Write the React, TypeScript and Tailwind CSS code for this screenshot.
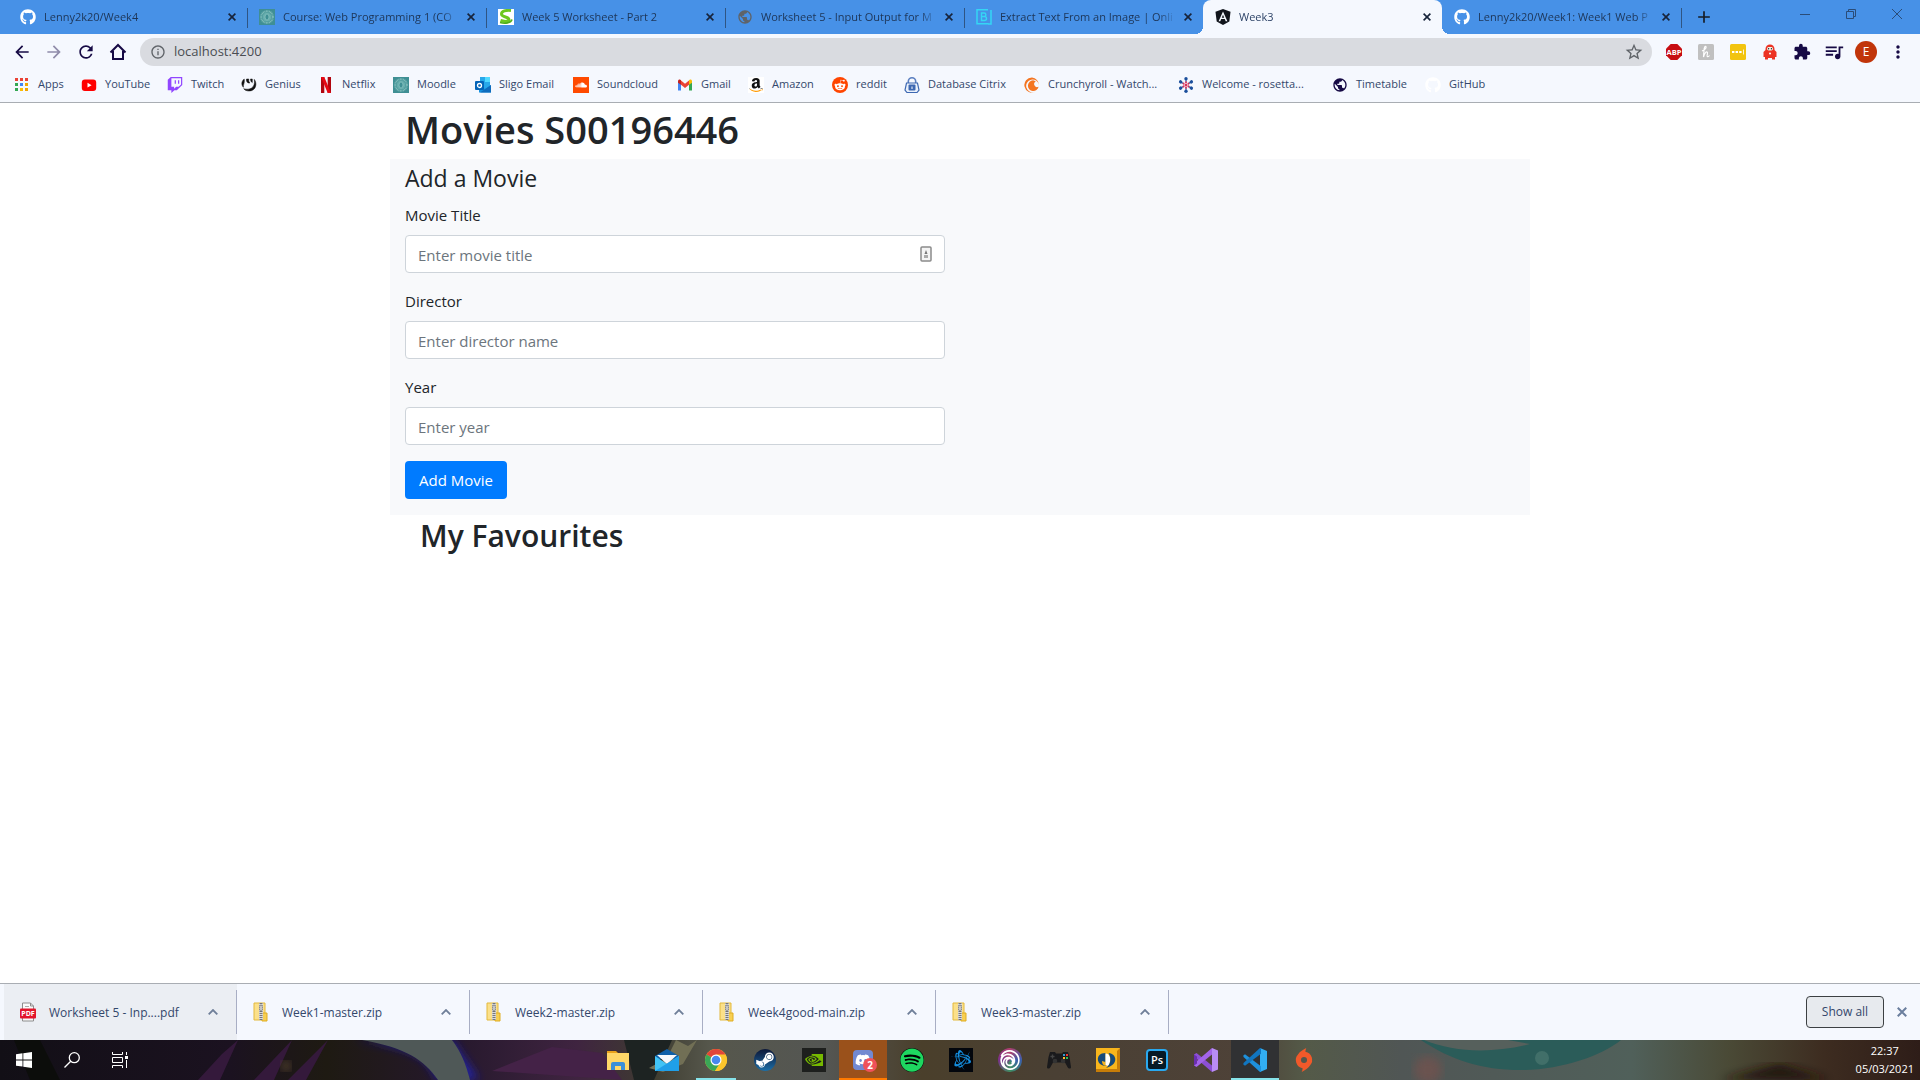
import type { ReactNode } from "react";
import { FaAmazon, FaBattleNet, FaDiscord, FaGithub, FaRedditAlien, FaSoundcloud, FaSpotify, FaSteamSymbol, FaTwitch } from "react-icons/fa";
import {
  MdAdd, MdArrowBack, MdArrowForward, MdExtension, MdInfoOutline, MdMoreVert,
  MdPublic, MdQueueMusic, MdRefresh, MdStarBorder,
} from "react-icons/md";
import { SiNvidia, SiUbisoft } from "react-icons/si";

/* ---------- small drawings ---------- */

const Cross = ({ className }: { className: string }) => (
  <svg viewBox="0 0 8 8" className={className} stroke="currentColor" strokeWidth="1.600"><path d="M.6.6l6.800 6.800M7.400.6L.6 7.400" /></svg>
);

const Moodle = () => (
  <svg viewBox="0 0 16 16" className="size-4">
    <rect width="16" height="16" fill="#3f8f94" />
    <circle cx="8" cy="8" r="5.800" fill="none" stroke="#7fbcb9" strokeWidth="2" strokeDasharray="1 .5" />
    <circle cx="8" cy="8" r="4.500" fill="#66adad" />
    <ellipse cx="8" cy="8" rx="2" ry="3" fill="#3f8f94" stroke="#9bd0cc" strokeWidth=".6" />
  </svg>
);

const Sharp = () => (
  <svg viewBox="0 0 16 16" className="size-4">
    <rect width="16" height="16" fill="#fff" />
    <path d="M13 1.500C8 1 3.500 2 3.500 5c0 3.500 7.500 2.500 7.500 5.500 0 2-4 2.500-8.500 1" fill="none" stroke="#6cc820" strokeWidth="3" />
    <path d="M2 13.500c5 1.500 11 .5 12-3" fill="none" stroke="#4fae17" strokeWidth="1.600" />
  </svg>
);

const Brandfolder = () => (
  <svg viewBox="0 0 16 16" className="size-4" fill="none" stroke="#35d6f5">
    <path d="M12 .8H1v14h11.500M15 1v14h-3" strokeWidth="1.500" />
    <path d="M5.500 4v7.500h3a2 2 0 0 0 0-4h-3 2.600a1.700 1.700 0 0 0 0-3.500z" strokeWidth="1.400" />
  </svg>
);

const Angular = () => (
  <svg viewBox="0 0 16 16" className="size-4">
    <path d="M8 0l7.500 2.700-1.200 9.700L8 16l-6.300-3.600L.5 2.700z" fill="#11141b" />
    <path d="M8 2.500L3.600 12.300h1.700l.9-2.200h3.600l.9 2.200h1.700zM8 5.700l1.200 3H6.800z" fill="#f5f8fe" />
  </svg>
);

const Apps = () => (
  <svg viewBox="0 0 16 16" className="size-4">
    {["#ea4335", "#ea4335", "#ea4335", "#34a853", "#4285f4", "#f2a600", "#34a853", "#fbbc04", "#f2a600"].map((c, i) => (
      <rect key={i} x={1 + (i % 3) * 5} y={1 + Math.floor(i / 3) * 5} width="3" height="3" fill={c} />
    ))}
  </svg>
);

const YouTube = () => (
  <svg viewBox="0 0 16 16" className="size-4">
    <rect x=".8" y="2.500" width="14.400" height="11.500" rx="3" fill="#f00" />
    <path d="M6.500 5.800v4.800L10.600 8.200z" fill="#fff" />
  </svg>
);

const Genius = () => (
  <svg viewBox="0 0 16 16" className="size-4">
    <path d="M3.200 2c-3 2.400-3 6-.8 8.300C2 7.500 4 6 3.200 2zM5.500 2h2.300c-.3 2 .2 3.200 1.200 4-2.300.4-4-1.200-3.500-4zM9.500 2h1.800v3.600c-1.200-.6-1.800-2-1.800-3.600zM13.300 2.400c3.200 4 1.700 11.600-5.300 11.600-2.500 0-4.200-1-5.300-2.300 5.800 1.800 12-.7 10.600-9.300z" fill="#111" stroke="#111" strokeWidth=".5" />
  </svg>
);

const Netflix = () => (
  <svg viewBox="0 0 16 16" className="size-4">
    <path d="M3 0h3.300v16L3 16zM9.700 0H13v16H9.700z" fill="#b1060f" />
    <path d="M3 0h3.300L13 16H9.700z" fill="#e50914" />
  </svg>
);

const Outlook = () => (
  <svg viewBox="0 0 16 16" className="size-4">
    <rect x="5" y="0" width="10" height="12" fill="#28a8ea" />
    <rect x="10" y="0" width="5" height="5" fill="#50d9ff" />
    <path d="M4 8l6 4 6-4v7.500H4z" fill="#1490df" />
    <path d="M16 8v7.500H5z" fill="#0f6cbd" />
    <rect x="0" y="4" width="9" height="9" rx="1" fill="#0364b8" />
    <circle cx="4.500" cy="8.500" r="2" fill="none" stroke="#fff" strokeWidth="1.300" />
  </svg>
);

const Gmail = () => (
  <svg viewBox="0 0 16 16" className="size-4">
    <path d="M1 4v9.500h3V6z" fill="#4285f4" />
    <path d="M15 4v9.500h-3V6z" fill="#34a853" />
    <path d="M4 3.500l4 3.300 4-3.300v4.200l-4 3.200-4-3.200z" fill="#ea4335" />
    <path d="M1 4.500C1 2.500 3 2 4 3.300v4.400l-3-2z" fill="#c5221f" />
    <path d="M15 4.500c0-2-2-2.500-3-1.200v4.400l3-2z" fill="#fbbc04" />
  </svg>
);

const Lock = () => (
  <svg viewBox="0 0 16 16" className="size-4">
    <path d="M4.300 7V4.500a3.700 3.700 0 0 1 7.400 0V7" fill="none" stroke="#5a7fc0" strokeWidth="1.600" />
    <path d="M2.500 6h11l1.500 7-2 2.500H3L1 13z" fill="#eaf1fb" stroke="#3d68b2" strokeWidth="1.200" />
    <rect x="4.500" y="7.500" width="7" height="6" rx="1" fill="#3d68b2" />
    <path d="M8 9.500v2.500" stroke="#fff" />
  </svg>
);

const Crunchyroll = () => (
  <svg viewBox="0 0 16 16" className="size-4">
    <path d="M8 .5a7.500 7.500 0 1 0 3 14.300A6.400 6.400 0 1 1 14.900 8 7.500 7.500 0 0 0 8 .5z" fill="#f47521" />
    <path d="M9 3.300a5.400 5.400 0 1 0 5.600 6.500A2.600 2.600 0 1 1 11.800 4.500 5.400 5.400 0 0 0 9 3.300z" fill="#f47521" />
  </svg>
);

const Rosetta = () => (
  <svg viewBox="0 0 16 16" className="size-4">
    {[0, 60, 120, 180, 240, 300].map((a) => (
      <g key={a} transform={`rotate(${a} 8 8)`}>
        <path d="M8 5V2" stroke="#1b4f9c" strokeWidth="1" />
        <circle cx="8" cy="1.800" r="1.700" fill="#1b4f9c" />
        <circle cx="8" cy="5.200" r="1" fill="#d8335a" />
      </g>
    ))}
    <circle cx="8" cy="8" r="1.500" fill="#d8335a" />
  </svg>
);

const Amazon = () => (
  <span className="flex size-4 items-center justify-center bg-white">
    <svg viewBox="0 0 448 512" className="size-4">
      <defs>
        <linearGradient id="amz" gradientUnits="userSpaceOnUse" x1="0" x2="0" y1="0" y2="512">
          <stop offset=".72" stopColor="#111" />
          <stop offset=".73" stopColor="#f90" />
        </linearGradient>
      </defs>
      <FaAmazon size={512} x={-32} style={{ fill: "url(#amz)" }} />
    </svg>
  </span>
);

const Zip = () => (
  <svg viewBox="0 0 16 20" className="h-5 w-4">
    <path d="M1 1h11v17H1z" fill="#fbe08a" stroke="#e3b93c" />
    <path d="M9 11h5v8H9z" fill="#f7cf52" stroke="#e0ad22" />
    <path d="M6 1h4v17H6z" fill="#d9d9d9" />
    <path d="M8 1v17" stroke="#777" strokeWidth="3" strokeDasharray="1 1" />
    <rect x="7" y="3" width="2" height="6" rx="1" fill="#f4f4f4" stroke="#555" strokeWidth=".6" />
  </svg>
);

const Pdf = () => (
  <svg viewBox="0 0 16 20" className="h-5 w-4">
    <path d="M2.500 1h8l3 3v15h-11z" fill="#fafafa" stroke="#8d8d8d" />
    <path d="M10.500 1v3h3" fill="none" stroke="#8d8d8d" />
    <path d="M5 4.500h4" stroke="#aaa" />
    <rect x="0" y="6.500" width="16" height="10" rx="1" fill="#e2162c" />
    <text x="8" y="14" textAnchor="middle" fontSize="7" fontWeight="700" fill="#fff" fontFamily="Open Sans, sans-serif">PDF</text>
  </svg>
);

/* ---------- browser chrome ---------- */

const Octocat = ({ className = "text-white" }: { className?: string }) => <FaGithub className={`size-4 ${className}`} />;

type Tab = { title: string; icon: ReactNode; active?: boolean; next?: boolean };

const tabs: Tab[] = [
  { title: "Lenny2k20/Week4", icon: <Octocat /> },
  { title: "Course: Web Programming 1 (CO", icon: <Moodle /> },
  { title: "Week 5 Worksheet - Part 2", icon: <Sharp /> },
  { title: "Worksheet 5 - Input Output for M", icon: <MdPublic className="size-4 text-[#5f6368]" /> },
  { title: "Extract Text From an Image | Onli", icon: <Brandfolder />, next: true },
  { title: "Week3", icon: <Angular />, active: true },
  { title: "Lenny2k20/Week1: Week1 Web P", icon: <Octocat /> },
];

function TabStrip() {
  return (
    <header className="flex h-[34px] bg-[#4791e7] pl-2 text-[#1d3557]">
      <div role="tablist" className="flex min-w-0">
        {tabs.map((t) => (
          <div
            key={t.title}
            role="tab"
            aria-selected={!!t.active}
            className={`relative flex w-[239px] min-w-0 items-center pr-[7px] pl-3 ${t.active ? "rounded-t-lg bg-[#f5f8fe] text-[#2e4468]" : ""}`}
          >
            {t.icon}
            <span className="mr-1 ml-2 flex-1 overflow-hidden whitespace-nowrap [mask-image:linear-gradient(to_right,#000_90%,transparent)]">{t.title}</span>
            <button aria-label="Close tab" className="flex size-4 items-center justify-center text-[#17233a]">
              <Cross className="size-2" />
            </button>
            {!t.active && !t.next && <i className="absolute top-2 -right-px h-5 w-px bg-[#2f5583]" />}
            {t.active && (
              <>
                <i className="absolute bottom-0 -left-2 size-2 bg-[radial-gradient(circle_at_0_0,#4791e7_8px,#f5f8fe_8px)]" />
                <i className="absolute -right-2 bottom-0 size-2 bg-[radial-gradient(circle_at_100%_0,#4791e7_8px,#f5f8fe_8px)]" />
              </>
            )}
          </div>
        ))}
      </div>
      <button aria-label="New tab" className="ml-[11px] flex w-6 items-center justify-center text-[#161c26]">
        <MdAdd className="size-5" />
      </button>
      <div className="ml-auto flex h-7 text-[#2a4c78]">
        <button aria-label="Minimise" className="flex w-[46px] items-center justify-center">
          <svg viewBox="0 0 10 10" className="size-2.5" stroke="currentColor"><path d="M0 5.500h10" /></svg>
        </button>
        <button aria-label="Restore" className="flex w-[46px] items-center justify-center">
          <svg viewBox="0 0 10 10" className="size-2.5" fill="none" stroke="currentColor"><path d="M.5 2.500h7v7h-7zM2.500 2V.5h7v7H8" /></svg>
        </button>
        <button aria-label="Close" className="flex w-[46px] items-center justify-center">
          <svg viewBox="0 0 10 10" className="size-2.5" stroke="currentColor"><path d="M0 0l10 10M10 0L0 10" /></svg>
        </button>
      </div>
    </header>
  );
}

function ToolButton({ label, children }: { label: string; children: ReactNode }) {
  return (
    <button aria-label={label} className="flex size-8 items-center justify-center text-[#160a45]">
      {children}
    </button>
  );
}

function Toolbar() {
  return (
    <div className="flex h-[35px] items-center bg-[#f5f8fe] pr-1.5 pl-1.5">
      <ToolButton label="Back"><MdArrowBack className="size-5" /></ToolButton>
      <ToolButton label="Forward"><MdArrowForward className="size-5 opacity-45" /></ToolButton>
      <ToolButton label="Reload"><MdRefresh className="size-5" /></ToolButton>
      <ToolButton label="Home">
        <svg viewBox="0 0 18 18" className="size-[18px]" fill="none" stroke="currentColor" strokeWidth="2"><path d="M1.500 9.500L9 2l7.500 7.500M4 8v8h10V8" /></svg>
      </ToolButton>
      <label className="ml-1.5 flex h-7 flex-1 items-center rounded-full bg-[#d9dbe0] pr-2 pl-2.5 text-[#5f6368]">
        <MdInfoOutline className="size-4" />
        <input aria-label="Address" defaultValue="localhost:4200" className="ml-2 flex-1 bg-transparent text-[13px] text-[#4a4d52] outline-none" />
        <MdStarBorder className="size-5" />
      </label>
      <div className="ml-1.5 flex items-center">
        <ToolButton label="Adblock Plus">
          <svg viewBox="0 0 16 16" className="size-4">
            <path d="M4.700 0h6.600L16 4.700v6.600L11.300 16H4.700L0 11.300V4.700z" fill="#c70d12" />
            <text x="8" y="10.800" textAnchor="middle" fontSize="7.500" fontWeight="700" fill="#fff" fontFamily="Open Sans, sans-serif">ABP</text>
          </svg>
        </ToolButton>
        <ToolButton label="Honey">
          <svg viewBox="0 0 16 16" className="size-4">
            <rect width="16" height="16" rx="1.500" fill="#c0c0c0" />
            <path d="M4 7c3-1 4.500-3 4-4.300S6 3 6 6.500L5.500 13C6.500 9.500 8 7.500 9.200 8s-.9 4 .1 4.500 1.700-.3 2.200-1" fill="none" stroke="#fff" strokeWidth="1.200" />
          </svg>
        </ToolButton>
        <ToolButton label="Password manager">
          <svg viewBox="0 0 16 16" className="size-4">
            <rect width="16" height="16" rx="1.500" fill="#f2c40f" />
            <path d="M2 8h9.600" stroke="#fff" strokeWidth="2.200" strokeDasharray="2.400 1.200" />
            <path d="M13.500 5.500v5" stroke="#fff" strokeWidth=".8" />
          </svg>
        </ToolButton>
        <ToolButton label="VPN">
          <svg viewBox="0 0 16 16" className="size-4">
            <path d="M3.500 6V5a4.500 4.500 0 0 1 9 0v1l2 2v5h-1.500v2.500h-3V14H6v1.500H3V13H1.500V8z" fill="#ec3324" />
            <rect x="5" y="3" width="6" height="3.500" rx="1.700" fill="#f2f6ea" />
            <circle cx="6.600" cy="4.700" r=".7" fill="#222" /><circle cx="9.400" cy="4.700" r=".7" fill="#222" />
            <circle cx="8" cy="9.500" r="1" fill="#fff" />
          </svg>
        </ToolButton>
        <ToolButton label="Extensions"><MdExtension className="size-[18px]" /></ToolButton>
        <ToolButton label="Media"><MdQueueMusic className="size-[22px]" /></ToolButton>
        <ToolButton label="Profile">
          <span className="flex size-[22px] items-center justify-center rounded-full bg-[#c1350a] text-xs text-white">E</span>
        </ToolButton>
        <ToolButton label="Menu"><MdMoreVert className="size-5" /></ToolButton>
      </div>
    </div>
  );
}

const bookmarks: { label: string; icon: ReactNode; width: string }[] = [
  { label: "Apps", icon: <Apps />, width: "w-[67px]" },
  { label: "YouTube", icon: <YouTube />, width: "w-[86px]" },
  { label: "Twitch", icon: <FaTwitch className="size-4 text-[#9146ff]" />, width: "w-[74px]" },
  { label: "Genius", icon: <Genius />, width: "w-[77px]" },
  { label: "Netflix", icon: <Netflix />, width: "w-[75px]" },
  { label: "Moodle", icon: <Moodle />, width: "w-[82px]" },
  { label: "Sligo Email", icon: <Outlook />, width: "w-[98px]" },
  {
    label: "Soundcloud",
    icon: <span className="flex size-4 items-center justify-center bg-[#ff4a00]"><FaSoundcloud className="size-3 text-white" /></span>,
    width: "w-[104px]",
  },
  { label: "Gmail", icon: <Gmail />, width: "w-[71px]" },
  { label: "Amazon", icon: <Amazon />, width: "w-[84px]" },
  {
    label: "reddit",
    icon: <span className="flex size-4 items-center justify-center rounded-full bg-[#ff4500]"><FaRedditAlien className="size-3 text-white" /></span>,
    width: "w-[72px]",
  },
  { label: "Database Citrix", icon: <Lock />, width: "w-[120px]" },
  { label: "Crunchyroll - Watch...", icon: <Crunchyroll />, width: "w-[154px]" },
  { label: "Welcome - rosetta...", icon: <Rosetta />, width: "w-[154px]" },
  { label: "Timetable", icon: <MdPublic className="size-[18px] text-[#160a45]" />, width: "w-[93px]" },
  { label: "GitHub", icon: <Octocat />, width: "w-[77px]" },
];

function BookmarksBar() {
  return (
    <nav className="flex h-[34px] items-center border-b border-[#a9adb3] bg-[#f5f8fe] pb-0.5 pl-3.5 text-[#33476b]">
      {bookmarks.map((b) => (
        <a key={b.label} href="#" className={`flex shrink-0 items-center gap-2 whitespace-nowrap ${b.width}`}>
          <span className="flex size-4 shrink-0 items-center justify-center">{b.icon}</span>
          {b.label}
        </a>
      ))}
    </nav>
  );
}

/* ---------- page ---------- */

function Field({ id, label, placeholder, children }: { id: string; label: string; placeholder: string; children?: ReactNode }) {
  return (
    <div className="relative mb-4">
      <label htmlFor={id} className="mb-2 block">{label}</label>
      <input id={id} placeholder={placeholder} className="block h-[38px] w-full rounded border border-[#ced4da] bg-white px-3 pt-0.5 placeholder:text-[#6c757d]" />
      {children}
    </div>
  );
}

function MoviesPage() {
  return (
    <main className="flex-1 bg-white text-[15px] leading-6 text-[#212529]">
      <div className="mx-auto max-w-[1140px]">
        <h1 className="px-[15px] pt-0.5 pb-1.5 text-[38px] leading-[48px] font-semibold">Movies S00196446</h1>
        <section className="bg-[#f8f9fb] px-[15px] pt-1.5 pb-4">
          <h4 className="mb-3 text-[23px] leading-[26px]">Add a Movie</h4>
          <form className="w-[540px] max-w-full" onSubmit={(e) => e.preventDefault()}>
            <Field id="title" label="Movie Title" placeholder="Enter movie title">
              <svg viewBox="0 0 12 16" className="absolute right-[13px] bottom-[11px] h-4 w-3">
                <rect x="1" y="1" width="10" height="14" rx="1" fill="#f4f4f4" stroke="#8a8a8a" strokeWidth="1.500" />
                <path d="M6 4l1.500 4h-3z" fill="#777" /><rect x="4" y="9" width="4" height="3" fill="#aaa" />
              </svg>
            </Field>
            <Field id="director" label="Director" placeholder="Enter director name" />
            <Field id="year" label="Year" placeholder="Enter year" />
            <button className="h-[38px] rounded bg-[#007bff] px-3.5 text-white">Add Movie</button>
          </form>
        </section>
        <h2 className="px-[30px] pt-0.5 text-[30px] leading-[38px] font-semibold">My Favourites</h2>
      </div>
    </main>
  );
}

/* ---------- downloads shelf ---------- */

const downloads = ["Worksheet 5 - Inp....pdf", "Week1-master.zip", "Week2-master.zip", "Week4good-main.zip", "Week3-master.zip"];

function DownloadShelf() {
  return (
    <div className="flex h-[57px] items-center border-t border-[#a9adb3] bg-[#f5f8fe] pl-1 text-xs text-[#33476b]">
      {downloads.map((d, i) => (
        <div key={d} className={`flex h-full w-[233px] items-center ${i === 0 ? "bg-[#ebeef3]" : ""}`}>
          <div className="flex h-11 flex-1 items-center border-r border-[#a8aec4] pr-[18px] pl-4">
            {i === 0 ? <Pdf /> : <Zip />}
            <span className="ml-[13px] flex-1 pt-0.5 whitespace-nowrap">{d}</span>
            <button aria-label={`Options for ${d}`}>
              <svg viewBox="0 0 10 6" className="h-1.5 w-2.5" fill="none" stroke="#6f7f99" strokeWidth="1.800"><path d="M.7 5.300L5 1l4.300 4.300" /></svg>
            </button>
          </div>
        </div>
      ))}
      <button className="ml-auto h-8 w-[78px] rounded border border-[#3c4043] bg-[#e7eaee] text-[#33476b]">Show all</button>
      <button aria-label="Close downloads" className="mr-2.5 ml-2.5 flex size-4 items-center justify-center text-[#6b7f9e]">
        <Cross className="size-2.5" />
      </button>
    </div>
  );
}

/* ---------- taskbar ---------- */

const Explorer = () => (
  <svg viewBox="0 0 24 24" className="size-6">
    <path d="M1 3h9l2 2h11v4H1z" fill="#e9a21b" />
    <rect x="1" y="5" width="22" height="17" fill="#ffd768" />
    <path d="M5 22v-6a2 2 0 0 1 2-2h10a2 2 0 0 1 2 2v6h-4v-4H9v4z" fill="#3a8fd8" />
  </svg>
);

const Mail = () => (
  <svg viewBox="0 0 24 24" className="size-6">
    <path d="M0 8L12 1l12 7v3H0z" fill="#0f5fa8" />
    <path d="M2 7h20l-10 9z" fill="#f6f8fb" />
    <path d="M0 8l12 8 12-8v15H0z" fill="#41c3f5" />
    <path d="M0 23L24 8v15z" fill="#1f9fe8" />
  </svg>
);

const Chrome = () => (
  <svg viewBox="0 0 24 24" className="size-6">
    <circle cx="12" cy="12" r="11" fill="#fbc52c" />
    <path d="M12 12L2.500 6.500A11 11 0 0 1 21.500 6.500z" fill="#e2453a" />
    <path d="M2.500 6.500A11 11 0 0 0 11 23l5.500-8.500L12 12z" fill="#3aa757" />
    <path d="M12 6.500h9.500a11 11 0 0 1-10.500 16.500l5.700-8.800z" fill="#fbc52c" />
    <circle cx="12" cy="12" r="5.500" fill="#fff" /><circle cx="12" cy="12" r="4.300" fill="#4788f0" />
  </svg>
);

const Steam = () => (
  <span className="flex size-[22px] items-center justify-center overflow-hidden rounded-full bg-linear-to-b from-[#0b1738] to-[#1b6fa8]">
    <FaSteamSymbol className="size-5 text-white" />
  </span>
);

const Discord = () => (
  <span className="relative flex size-5 items-center justify-center rounded-sm bg-[#7289d1]">
    <FaDiscord className="size-4 text-white" />
    <b className="absolute top-2 left-2.5 flex size-3.5 items-center justify-center rounded-full bg-[#f0525a] text-[10px] text-white">2</b>
  </span>
);

const Gamepad = () => (
  <svg viewBox="0 0 24 20" className="h-5 w-6">
    <path d="M3 2h5l1 1.500h6L16 2h5l1.500 5L24 17c0 2-2.500 2-3.500 0L18 12.500H6L3.500 17C2.500 19 0 19 0 17L1.500 7z" fill="#1a1a1c" />
    <circle cx="8" cy="11" r="2.300" fill="#333" /><circle cx="16" cy="11" r="2.300" fill="#333" />
    <path d="M3.500 6.500h4M5.500 4.500v4" stroke="#444" strokeWidth="1.300" />
    <rect x="16" y="4" width="2" height="2" fill="#39c" /><rect x="19" y="4" width="2" height="2" fill="#e33" />
    <rect x="16" y="7" width="2" height="2" fill="#fb3" /><rect x="19" y="7" width="2" height="2" fill="#3b5" />
  </svg>
);

const GoldApp = () => (
  <svg viewBox="0 0 24 24" className="size-6">
    <rect width="24" height="24" fill="#c77d08" /><path d="M0 0h24l-3 3v18H0z" fill="#f8b51c" />
    <path d="M9.500 5C4 5 1 8.500 2 12.500s4 5 7.500 5.500z" fill="#174a7a" />
    <path d="M6 13l3.500 1v4C7 17.500 6 15.500 6 13z" fill="#f8b51c" />
    <path d="M9.500 5.500c5 0 6 6.500 3 12.500l-3-1z" fill="#fff" />
    <path d="M12.500 5c9 1 10 12-2.500 15 5-4 5.500-9.500 2.500-15z" fill="#174a7a" />
  </svg>
);

const Photoshop = () => (
  <span className="flex size-[22px] items-center justify-center rounded-sm border-2 border-[#29a9f0] bg-[#061a26] text-[11px] font-semibold text-white">Ps</span>
);

const VisualStudio = () => (
  <svg viewBox="0 0 24 24" className="size-6">
    <path d="M18 0l6 2.500v19L18 24z" fill="#b98cf5" />
    <path d="M0 6.500L2.500 5 18 17.500V24L0 8.500z" fill="#8c4fd6" />
    <path d="M0 17.500L2.500 19 18 6.500V0L0 15.500z" fill="#a364ea" />
    <path d="M0 6.500L3 8.500v7L0 17.500z" fill="#6a2fb0" />
  </svg>
);

const VsCode = () => (
  <svg viewBox="0 0 24 24" className="size-6">
    <path d="M17 0l7 3v18l-7 3z" fill="#32aef2" />
    <path d="M.3 7.500L2 6.200l16 12V24h-1L.5 9z" fill="#1e91dc" />
    <path d="M.3 16.500L2 17.800l16-12V0h-1L.5 15z" fill="#1176c1" />
  </svg>
);

const Origin = () => (
  <svg viewBox="0 0 20 26" className="h-6 w-5">
    <path d="M12.500 0c-.6 1.300-1 2.800-1 4.100A9 9 0 0 1 16.500 19C14.500 22.500 10.500 24 7.500 26c.6-1.300 1-2.800 1-4.100A9 9 0 0 1 3.500 7C5.500 3.500 9.500 2 12.500 0z" fill="#f1592a" />
    <circle cx="10" cy="13" r="3.300" fill="#54564b" />
  </svg>
);

const apps: { name: string; icon: ReactNode; cell?: string; bar?: string }[] = [
  { name: "File Explorer", icon: <Explorer /> },
  { name: "Mail", icon: <Mail /> },
  { name: "Chrome", icon: <Chrome />, bar: "mx-1 bg-[#86e3ea]" },
  { name: "Steam", icon: <Steam /> },
  { name: "NVIDIA", icon: <span className="flex size-6 items-center justify-center bg-[#1d1f1d]"><SiNvidia className="size-[18px] text-[#76b900]" /></span> },
  { name: "Discord", icon: <Discord />, cell: "bg-[#9a511b]", bar: "bg-[#ff7a00]" },
  { name: "Spotify", icon: <span className="rounded-full bg-black"><FaSpotify className="size-6 text-[#1ed760]" /></span> },
  { name: "Battle.net", icon: <span className="flex size-6 items-center justify-center bg-[#03060c]"><FaBattleNet className="size-5 text-[#148ee0]" /></span> },
  {
    name: "Ubisoft Connect",
    icon: <span className="flex size-6 items-center justify-center rounded-full bg-[conic-gradient(#b0406e,#3a5fae,#3f8f62,#7a2f8a,#b0406e)]"><SiUbisoft className="size-5 text-white" /></span>,
  },
  { name: "Controller", icon: <Gamepad /> },
  { name: "Dictionary", icon: <GoldApp /> },
  { name: "Photoshop", icon: <Photoshop /> },
  { name: "Visual Studio", icon: <VisualStudio /> },
  { name: "Visual Studio Code", icon: <VsCode />, cell: "bg-[#303133]", bar: "bg-[#86e3ea]" },
  { name: "Origin", icon: <Origin /> },
];

const Wallpaper = () => (
  <svg viewBox="0 0 1920 40" preserveAspectRatio="none" className="absolute inset-0 size-full">
    <defs>
      <linearGradient id="wall">
        <stop offset="0" stopColor="#120f16" /><stop offset=".12" stopColor="#1b1220" />
        <stop offset=".17" stopColor="#1e1a12" /><stop offset=".235" stopColor="#25182c" />
        <stop offset=".3" stopColor="#3f2440" /><stop offset=".34" stopColor="#3e3c30" />
        <stop offset=".37" stopColor="#56574c" /><stop offset=".43" stopColor="#545653" />
        <stop offset=".48" stopColor="#4a3f2b" /><stop offset=".55" stopColor="#4a4034" />
        <stop offset=".65" stopColor="#4e4238" /><stop offset=".68" stopColor="#545a48" />
        <stop offset=".73" stopColor="#505655" /><stop offset=".85" stopColor="#50605a" />
        <stop offset=".9" stopColor="#4a4a36" /><stop offset=".95" stopColor="#3d2c20" />
        <stop offset="1" stopColor="#2e1d18" />
      </linearGradient>
      <filter id="soft"><feGaussianBlur stdDeviation="5" /></filter>
    </defs>
    <rect width="1920" height="40" fill="url(#wall)" />
    <path d="M14 0h26l20 40H30z" fill="#0c0d0b" />
    <path d="M238 0l-16 14-24 26h22zM292 0l-38 40h20zM328 0l-40 40h18z" fill="#34193b" />
    <path d="M355 0c60 6 75 20 82 40h42L452 0z" fill="#2323a0" filter="url(#soft)" />
    <path d="M362 0c45 8 62 20 76 40h32c-4-16-9-28-18-40z" fill="#4f5857" />
    <path d="M492 31l60-24 50 6 20 27z" fill="#442247" />
    <path d="M624 0h48l-18 40h-20z" fill="#1d2322" />
    <path d="M676 0l12 6 9-6-14 24-20 8-14-4 18-10z" fill="#716f55" />
    <path d="M1421 0c30 20 60 30 100 30s80-14 100-30z" fill="#2b5c59" />
    <path d="M1424 0c30 12 66 14 106 4l-22-4z" fill="#56605c" />
    <circle cx="1542" cy="18" r="7" fill="#416f69" />
    <circle cx="1428" cy="30" r="14" fill="#6a5350" filter="url(#soft)" />
    <path d="M1720 40l60-16 50 16z" fill="#231611" filter="url(#soft)" />
    <circle cx="286" cy="26" r="5" fill="#5a4632" filter="url(#soft)" />
  </svg>
);

function Taskbar() {
  return (
    <footer className="relative flex h-10 text-white">
      <Wallpaper />
      <div className="relative flex w-[594px] text-white">
        <button aria-label="Start" className="flex w-12 items-center justify-center">
          <svg viewBox="0 0 16 16" className="size-4" fill="#fff"><path d="M0 2.200L6.500 1.300v6.200H0zM7.300 1.200L16 0v7.500H7.300zM0 8.400h6.500v6.200L0 13.700zM7.300 8.400H16V16l-8.700-1.200z" /></svg>
        </button>
        <button aria-label="Search" className="flex w-12 items-center justify-center">
          <svg viewBox="0 0 16 16" className="size-4" fill="none" stroke="#fff" strokeWidth="1.300"><circle cx="10.300" cy="5.700" r="5" /><path d="M6.700 9.300L.5 15.500" /></svg>
        </button>
        <button aria-label="Task view" className="flex w-12 items-center justify-center">
          <svg viewBox="0 0 16 16" className="size-4" fill="none" stroke="#fff"><path d="M.5 0v2.500h10V0M.5 5.500h10v5H.5zM.5 16v-2.500h10V16M14.500 0v3M14.500 8v8" /><path d="M14.500 4v3" strokeWidth="3" /></svg>
        </button>
      </div>
      <div className="relative flex gap-px">
        {apps.map((a) => (
          <button key={a.name} aria-label={a.name} className={`relative flex w-12 items-center justify-center ${a.cell ?? ""}`}>
            {a.icon}
            {a.bar && <i className={`absolute inset-x-0 bottom-0 h-0.5 ${a.bar}`} />}
          </button>
        ))}
      </div>
      <div className="relative ml-auto flex flex-col items-center pt-0.5 pr-1.5 text-[11px] leading-[18px]">
        <time>22:37</time>
        <time>05/03/2021</time>
      </div>
    </footer>
  );
}

export default function App() {
  return (
    <div className="flex min-h-screen flex-col font-['Open_Sans','Noto_Sans',sans-serif] text-[11px]">
      <TabStrip />
      <Toolbar />
      <BookmarksBar />
      <MoviesPage />
      <DownloadShelf />
      <Taskbar />
    </div>
  );
}
